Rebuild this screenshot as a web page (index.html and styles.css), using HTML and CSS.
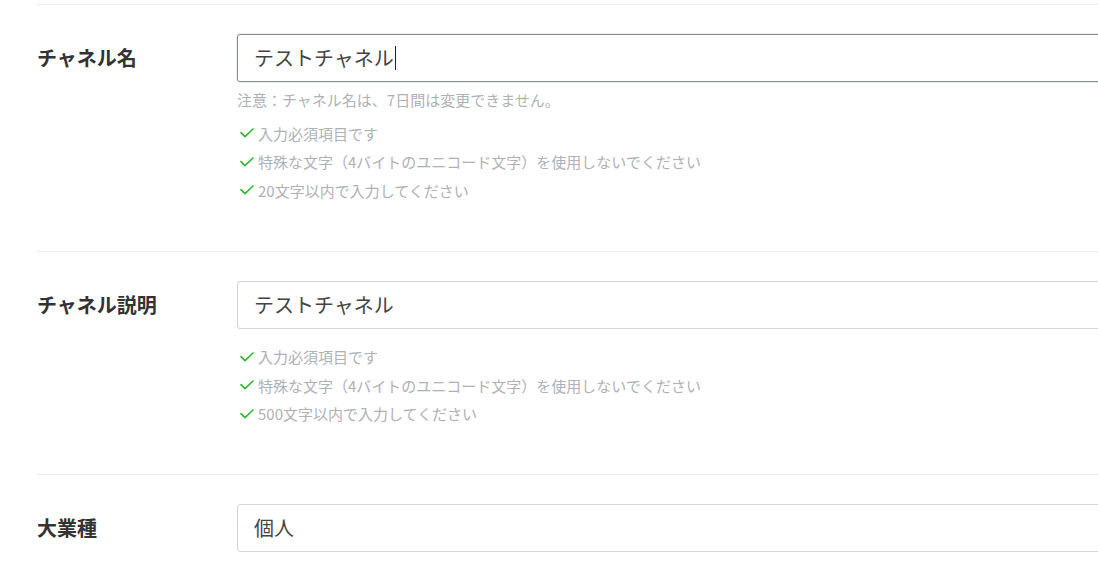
FILE: index.html
```html
<!DOCTYPE html>
<html lang="ja">
<head>
<meta charset="utf-8">
<title>チャネル設定</title>
<link rel="stylesheet" href="styles.css">
</head>
<body>
<main class="form">
  <section class="row">
    <div class="label-cell"><span class="label">チャネル名</span></div>
    <div class="control">
      <div class="field field--focus"><span class="value">テストチャネル</span><span class="caret"></span></div>
      <p class="note">注意：チャネル名は、7日間は変更できません。</p>
      <ul class="checks checks--after-note">
        <li><svg class="ok" viewBox="0 0 14 10" width="14" height="10"><polyline points="1,4.6 5,8.6 13,1" /></svg>入力必須項目です</li>
        <li><svg class="ok" viewBox="0 0 14 10" width="14" height="10"><polyline points="1,4.6 5,8.6 13,1" /></svg>特殊な文字（4バイトのユニコード文字）を使用しないでください</li>
        <li><svg class="ok" viewBox="0 0 14 10" width="14" height="10"><polyline points="1,4.6 5,8.6 13,1" /></svg>20文字以内で入力してください</li>
      </ul>
    </div>
  </section>
  <section class="row">
    <div class="label-cell"><span class="label">チャネル説明</span></div>
    <div class="control">
      <div class="field"><span class="value">テストチャネル</span></div>
      <ul class="checks">
        <li><svg class="ok" viewBox="0 0 14 10" width="14" height="10"><polyline points="1,4.6 5,8.6 13,1" /></svg>入力必須項目です</li>
        <li><svg class="ok" viewBox="0 0 14 10" width="14" height="10"><polyline points="1,4.6 5,8.6 13,1" /></svg>特殊な文字（4バイトのユニコード文字）を使用しないでください</li>
        <li><svg class="ok" viewBox="0 0 14 10" width="14" height="10"><polyline points="1,4.6 5,8.6 13,1" /></svg>500文字以内で入力してください</li>
      </ul>
    </div>
  </section>
  <section class="row">
    <div class="label-cell"><span class="label">大業種</span></div>
    <div class="control">
      <div class="field"><span class="value">個人</span></div>
    </div>
  </section>
</main>
</body>
</html>
```

FILE: styles.css
```css
html, body {
  margin: 0;
  padding: 0;
  background: #fff;
  overflow: hidden;
}
body {
  font-family: "Noto Sans CJK JP", "Noto Sans", sans-serif;
  color: #333;
}
.form {
  padding: 4px 0 0 37px;
  width: 1300px;
}
.row {
  display: grid;
  grid-template-columns: 200px 1fr;
  border-top: 1px solid #ececec;
  padding: 29px 0 46px;
}
.label-cell {
  height: 48px;
  display: flex;
  align-items: center;
}
.label {
  font-size: 20px;
  font-weight: 700;
  color: #333;
  line-height: 1;
}
.field {
  height: 48px;
  box-sizing: border-box;
  border: 1px solid #d4d4d4;
  border-radius: 3px;
  padding: 0 16px;
  display: flex;
  align-items: center;
  font-size: 20px;
  color: #444;
}
.field--focus {
  border-color: #878c95;
  box-shadow: 0 0 0 1px #eceef3;
}
.value {
  line-height: 1;
}
.caret {
  display: inline-block;
  width: 1px;
  height: 24px;
  background: #222;
  margin-left: 1px;
}
.note {
  margin: 7px 0 0;
  font-size: 15px;
  line-height: 21px;
  color: #aeb1b7;
}
.checks {
  list-style: none;
  margin: 14px 0 0;
  padding: 0;
}
.checks--after-note {
  margin-top: 9px;
}
.checks li {
  display: flex;
  align-items: center;
  height: 28.5px;
  font-size: 15px;
  color: #aeb1b7;
  padding-left: 3px;
}
.ok {
  margin-right: 4px;
  fill: none;
  stroke: #2fb52f;
  stroke-width: 1.6;
  stroke-linecap: round;
  stroke-linejoin: round;
}
```
